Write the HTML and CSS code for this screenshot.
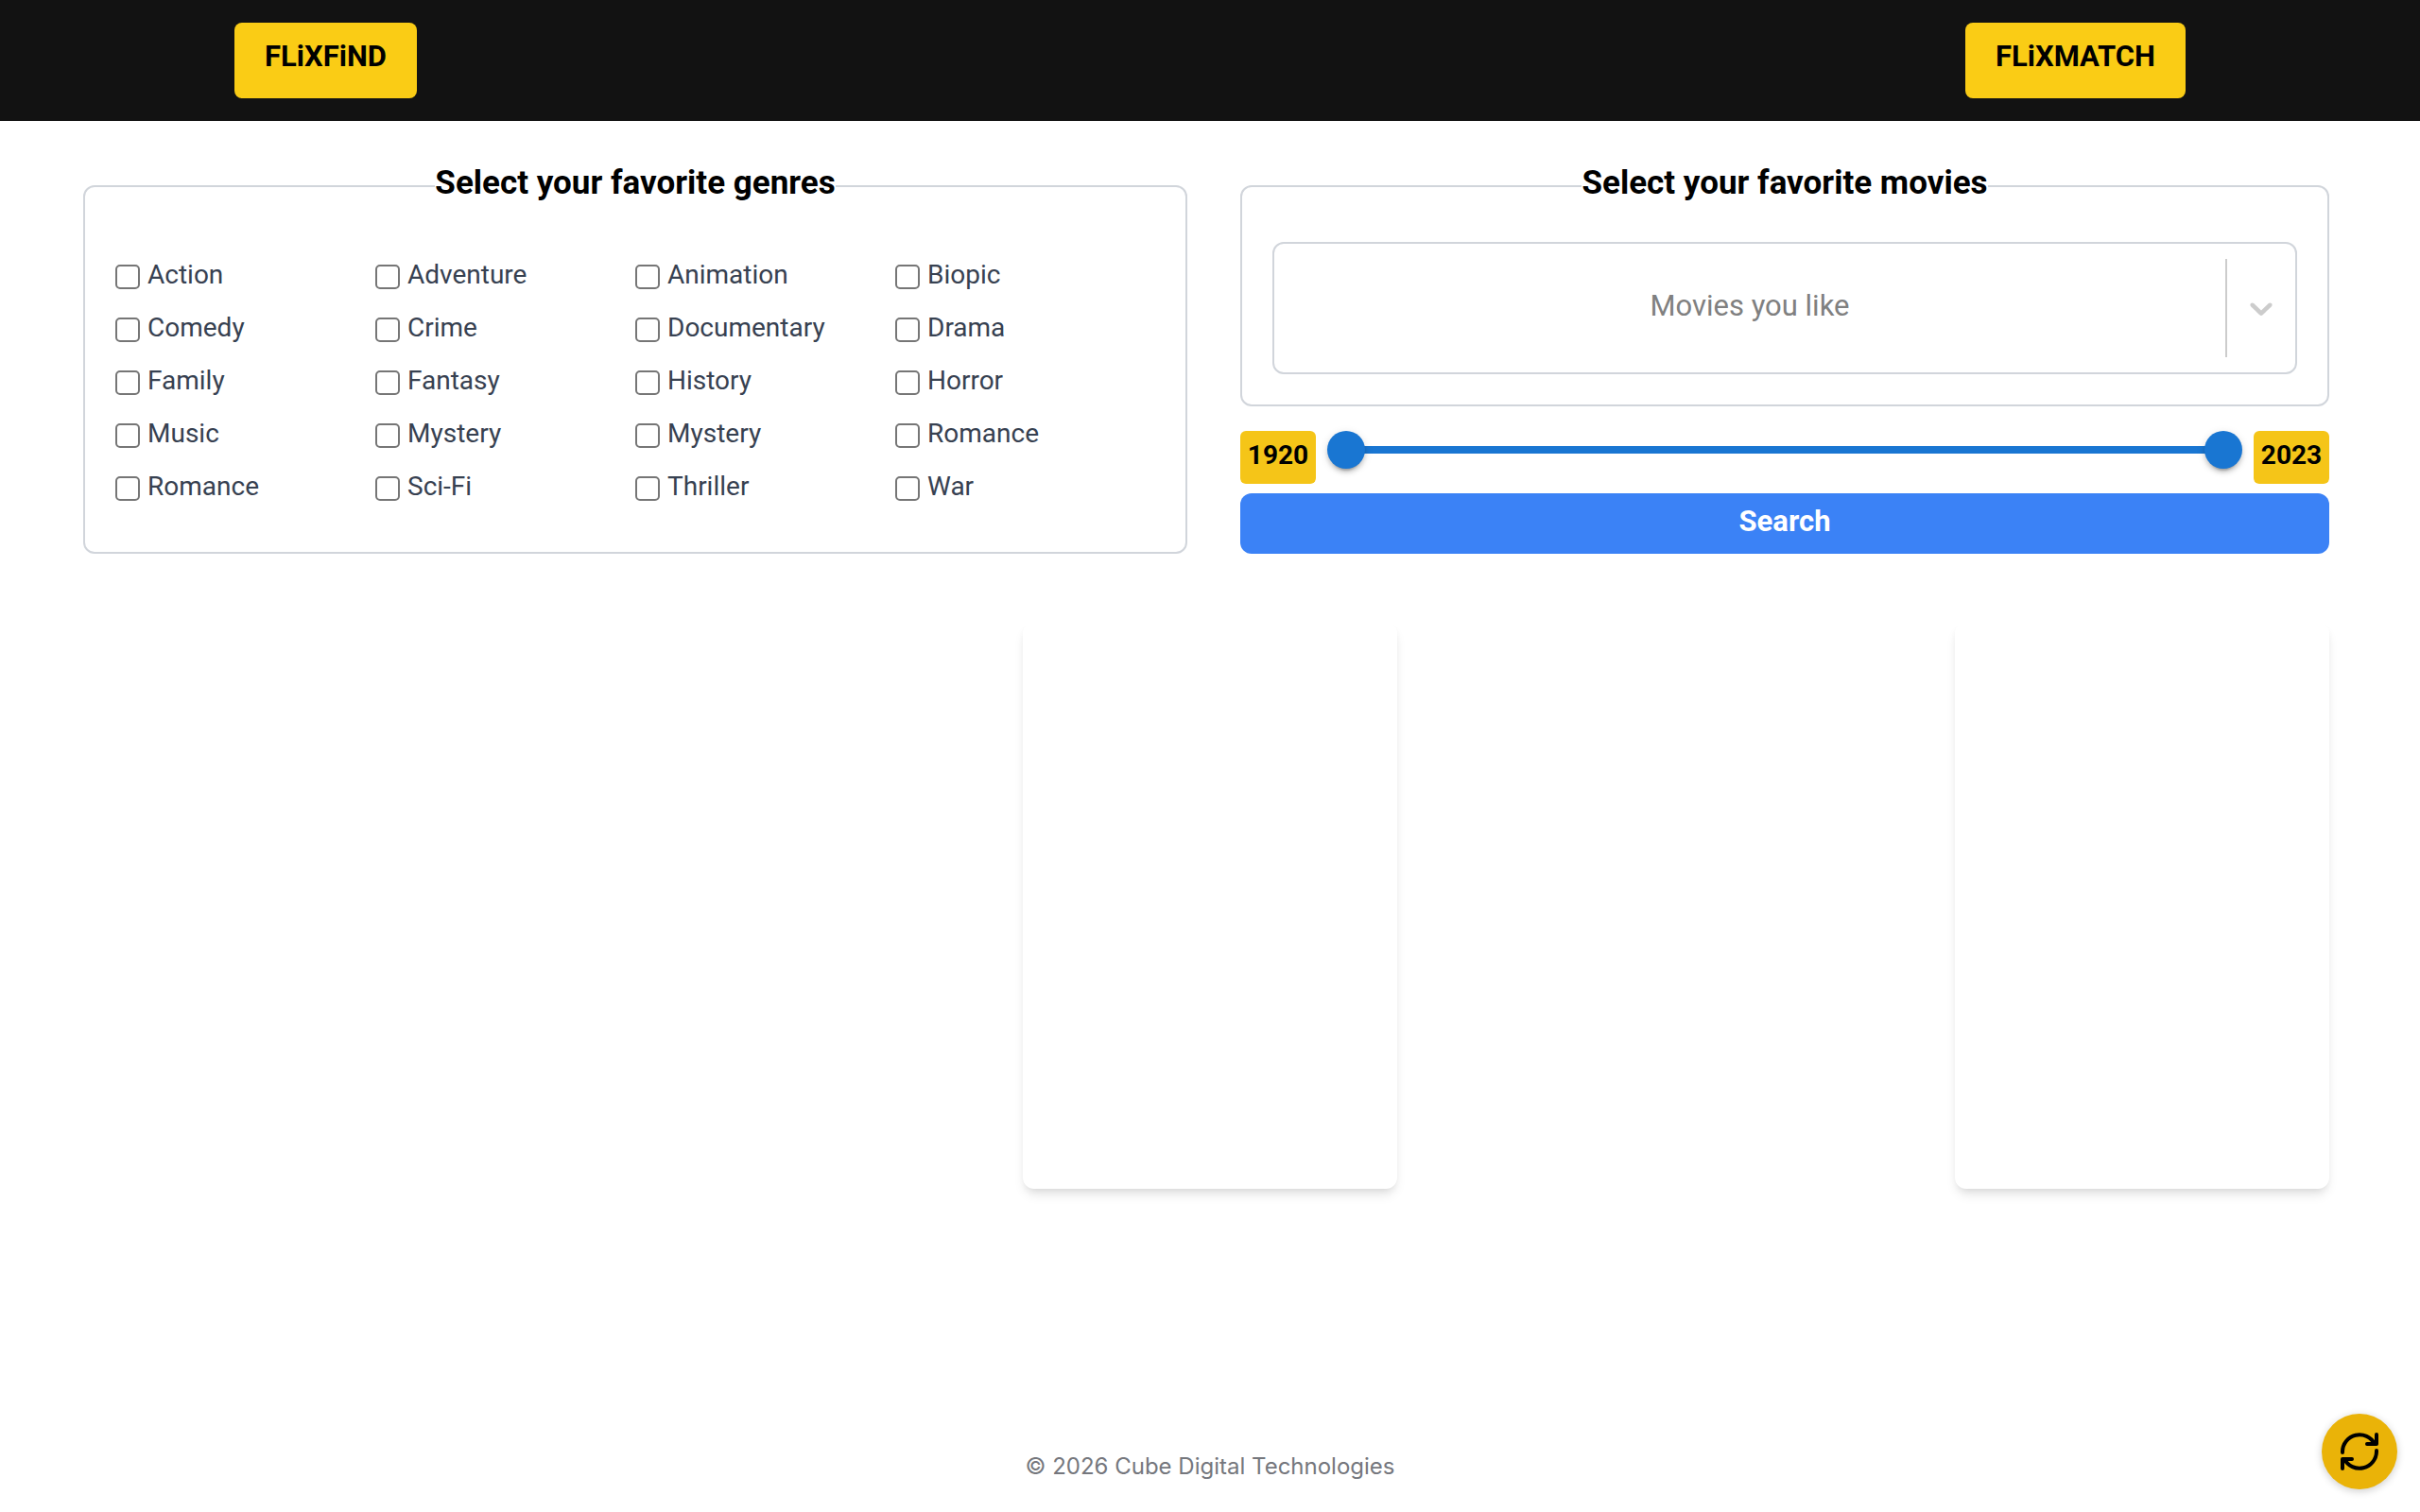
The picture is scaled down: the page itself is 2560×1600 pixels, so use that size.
FILE: index.html
```html
<!DOCTYPE html>
<html lang="en">
<head>
    <meta charset="UTF-8">
    <meta name="viewport" content="width=device-width, initial-scale=1.0">
    <title>FLiXFiND</title>
    <link rel="stylesheet" href="styles.css">
</head>
<body>
    <header class="navbar">
        <a class="nav-link" href="/">FLiXFiND</a>
        <a class="nav-link" href="/match">FLiXMATCH</a>
    </header>

    <main>
        <form class="search-form">
            <!-- Genres -->
            <fieldset class="panel">
                <legend>Select your favorite genres</legend>
                <div class="genres">
                    <label class="genre"><input type="checkbox" name="genre"><span>Action</span></label>
                    <label class="genre"><input type="checkbox" name="genre"><span>Adventure</span></label>
                    <label class="genre"><input type="checkbox" name="genre"><span>Animation</span></label>
                    <label class="genre"><input type="checkbox" name="genre"><span>Biopic</span></label>
                    <label class="genre"><input type="checkbox" name="genre"><span>Comedy</span></label>
                    <label class="genre"><input type="checkbox" name="genre"><span>Crime</span></label>
                    <label class="genre"><input type="checkbox" name="genre"><span>Documentary</span></label>
                    <label class="genre"><input type="checkbox" name="genre"><span>Drama</span></label>
                    <label class="genre"><input type="checkbox" name="genre"><span>Family</span></label>
                    <label class="genre"><input type="checkbox" name="genre"><span>Fantasy</span></label>
                    <label class="genre"><input type="checkbox" name="genre"><span>History</span></label>
                    <label class="genre"><input type="checkbox" name="genre"><span>Horror</span></label>
                    <label class="genre"><input type="checkbox" name="genre"><span>Music</span></label>
                    <label class="genre"><input type="checkbox" name="genre"><span>Mystery</span></label>
                    <label class="genre"><input type="checkbox" name="genre"><span>Mystery</span></label>
                    <label class="genre"><input type="checkbox" name="genre"><span>Romance</span></label>
                    <label class="genre"><input type="checkbox" name="genre"><span>Romance</span></label>
                    <label class="genre"><input type="checkbox" name="genre"><span>Sci-Fi</span></label>
                    <label class="genre"><input type="checkbox" name="genre"><span>Thriller</span></label>
                    <label class="genre"><input type="checkbox" name="genre"><span>War</span></label>
                </div>
            </fieldset>

            <div class="side">
                <!-- Movies -->
                <fieldset class="panel panel-movies">
                    <legend id="movies-title">Select your favorite movies</legend>
                    <div class="movie-select">
                        <select name="movies" aria-labelledby="movies-title">
                            <option value="" selected>Movies you like</option>
                        </select>
                        <span class="separator"></span>
                        <svg class="chevron" viewBox="0 0 20 20" aria-hidden="true">
                            <path d="M4.516 7.548c0.436-0.446 1.043-0.481 1.576 0l3.908 3.747 3.908-3.747c0.533-0.481 1.141-0.446 1.574 0 0.436 0.445 0.408 1.197 0 1.615-0.406 0.418-4.695 4.502-4.695 4.502-0.217 0.223-0.502 0.335-0.787 0.335s-0.57-0.112-0.789-0.335c0 0-4.287-4.084-4.695-4.502s-0.436-1.17 0-1.615z"/>
                        </svg>
                    </div>
                </fieldset>

                <!-- Year range -->
                <div class="years">
                    <label class="year" for="year-from">1920</label>
                    <div class="range">
                        <input type="range" id="year-from" min="1920" max="2023" value="1920">
                        <input type="range" id="year-to" min="1920" max="2023" value="2023">
                    </div>
                    <label class="year" for="year-to">2023</label>
                </div>

                <button class="search-btn" type="submit">Search</button>
            </div>
        </form>

        <section class="results">
            <div class="card card-empty"></div>
            <div class="card"></div>
            <div class="card"></div>
        </section>
    </main>

    <footer>© 2026 Cube Digital Technologies</footer>

    <button class="refresh-btn" type="button" aria-label="Refresh">
        <svg viewBox="0 0 40 40" aria-hidden="true">
            <path d="M2 21v-1a18 18 0 0 1 34-8"/>
            <path d="M38 2v10H28"/>
            <path d="M38 19v1a18 18 0 0 1-34 8"/>
            <path d="M2 38V28h10"/>
        </svg>
    </button>
</body>
</html>
```

FILE: styles.css
```css
* {
    box-sizing: border-box;
}
body {
    margin: 0;
    min-height: 100vh;
    display: flex;
    flex-direction: column;
    background-color: #fff;
    font-family: Roboto, "Liberation Sans", sans-serif;
    color: #374151;
}
main {
    flex: 1;
}

/* Header */
.navbar {
    display: flex;
    justify-content: space-between;
    padding: 24px 248px;
    background-color: #121212;
}
.nav-link {
    padding: 16px 32px 24px;
    border-radius: 8px;
    background-color: #facc15;
    color: #000;
    font-size: 31px;
    font-weight: bold;
    line-height: 40px;
    text-decoration: none;
}

/* Search form */
.search-form {
    display: grid;
    grid-template-columns: 73fr 72fr;
    gap: 56px;
    padding: 48px 96px 0 88px;
}
.panel {
    min-width: 0;
    margin: 0;
    padding: 54px 32px 48px;
    border: 2px solid #d1d5db;
    border-radius: 12px;
}
.panel legend {
    margin: 0 auto;
    padding: 0 0 6px;
    color: #000;
    font-size: 35px;
    font-weight: bold;
    line-height: 36px;
}
.genres {
    display: grid;
    grid-template-columns: repeat(4, 1fr);
    row-gap: 16px;
}
.genre {
    display: flex;
    align-items: center;
    gap: 8px;
    height: 40px;
    font-size: 28px;
}
.genre span {
    padding-bottom: 4px;
}
.genre input {
    appearance: none;
    width: 26px;
    height: 26px;
    margin: 2px 0 0;
    border: 2px solid #767676;
    border-radius: 5px;
    background-color: #fff;
}
.genre input:checked {
    background-color: #3b82f6;
}

/* Right column */
.side {
    display: flex;
    flex-direction: column;
}
.panel-movies {
    padding: 38px 32px 32px;
}
.movie-select {
    display: flex;
    align-items: center;
    height: 140px;
    padding-right: 16px;
    border: 2px solid #d1d5db;
    border-radius: 12px;
}
.movie-select select {
    appearance: none;
    flex: 1;
    height: 100%;
    padding: 0 0 6px;
    border: none;
    background: none;
    color: #808080;
    font-family: inherit;
    font-size: 31px;
    text-align: center;
    text-align-last: center;
}
.separator {
    align-self: stretch;
    width: 2px;
    margin: 16px;
    margin-left: 0;
    background-color: #ccc;
}
.chevron {
    width: 40px;
    height: 40px;
    fill: #ccc;
}
.years {
    display: flex;
    gap: 12px;
    margin: 26px 0 10px;
}
.year {
    width: 80px;
    padding: 8px 0 12px;
    border-radius: 6px;
    background-color: #f5c518;
    color: #000;
    font-size: 28px;
    font-weight: bold;
    line-height: 36px;
    text-align: center;
}
/* two sliders share one track */
.range {
    flex: 1;
    display: grid;
    height: 40px;
    background: linear-gradient(#1976d2, #1976d2) center / calc(100% - 40px) 8px no-repeat;
}
.range input {
    appearance: none;
    grid-area: 1 / 1;
    width: 100%;
    height: 40px;
    margin: 0;
    background: none;
    pointer-events: none;
}
.range input::-webkit-slider-thumb {
    appearance: none;
    width: 40px;
    height: 40px;
    border-radius: 50%;
    background-color: #1976d2;
    box-shadow: 0 6px 2px -4px rgba(0, 0, 0, 0.2), 0 4px 4px rgba(0, 0, 0, 0.14), 0 2px 10px rgba(0, 0, 0, 0.12);
    pointer-events: auto;
    cursor: pointer;
}
.search-btn {
    padding: 12px 0 16px;
    border: none;
    border-radius: 12px;
    background-color: #3b82f6;
    color: #fff;
    font-family: inherit;
    font-size: 31px;
    font-weight: bold;
    line-height: 36px;
    cursor: pointer;
}

/* Results */
.results {
    display: flex;
    justify-content: space-between;
    padding: 72px 96px 0;
}
.card {
    width: 396px;
    height: 600px;
    border-radius: 12px;
    background-color: #fff;
    box-shadow: 0 8px 12px -2px rgba(0, 0, 0, 0.1), 0 4px 8px -4px rgba(0, 0, 0, 0.1);
}
.card-empty {
    box-shadow: none;
}

footer {
    padding-bottom: 32px;
    color: #75777d;
    font-family: Inter, sans-serif;
    font-size: 24px;
    line-height: 32px;
    text-align: center;
}

.refresh-btn {
    position: fixed;
    right: 24px;
    bottom: 24px;
    width: 80px;
    height: 80px;
    padding: 20px;
    border: none;
    border-radius: 50%;
    background-color: #eab308;
    box-shadow: 0 2px 8px rgba(0, 0, 0, 0.2);
    cursor: pointer;
}
.refresh-btn svg {
    display: block;
    fill: none;
    stroke: #000;
    stroke-width: 4;
    stroke-linecap: round;
    stroke-linejoin: round;
}
```
